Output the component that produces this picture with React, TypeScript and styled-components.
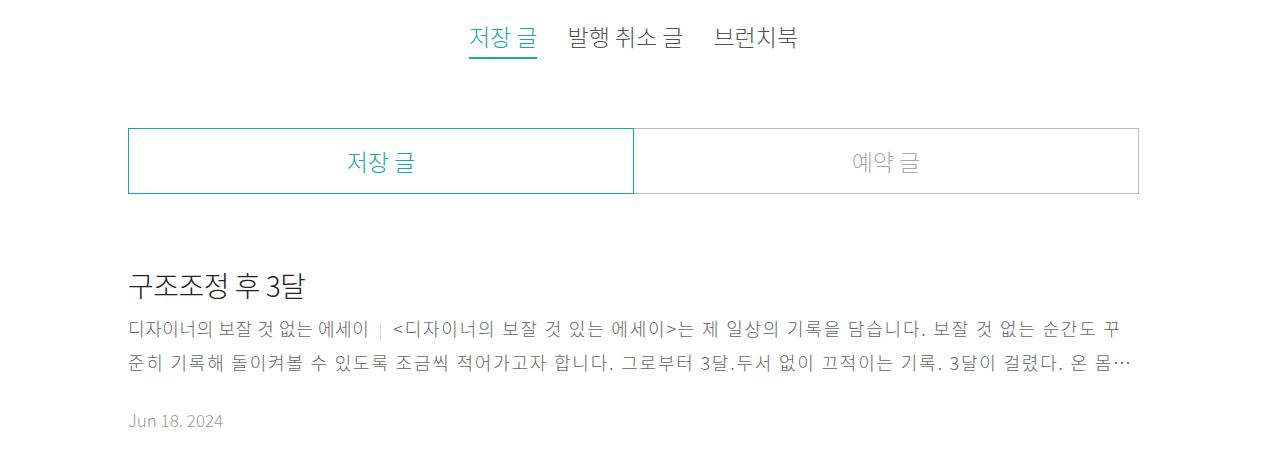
import React, { useState } from 'react';
import styled, { createGlobalStyle } from 'styled-components';

const GlobalStyle = createGlobalStyle`
    html, body {
        margin: 0;
        padding: 0;
        background: #ffffff;
    }
    body {
        font-family: 'Noto Sans CJK KR', 'Noto Sans', sans-serif;
        -webkit-font-smoothing: antialiased;
    }
`;

const TEAL = '#1aa9a2';

const Page = styled.div`
    padding: 0 141px 0 128px;
`;

const TopTabs = styled.nav`
    display: flex;
    justify-content: center;
    gap: 30px;
    padding-top: 21px;
`;

const TopTab = styled.button<{ $active?: boolean }>`
    background: none;
    border: none;
    padding: 0 0 5px;
    font-family: inherit;
    font-size: 23px;
    font-weight: 300;
    line-height: 31px;
    color: ${({ $active }) => ($active ? TEAL : '#555')};
    border-bottom: 2px solid ${({ $active }) => ($active ? TEAL : 'transparent')};
    cursor: pointer;
`;

const Segment = styled.div`
    display: flex;
    margin-top: 69px;
`;

const SegmentButton = styled.button<{ $active?: boolean }>`
    flex: 1;
    height: 66px;
    background: #fff;
    font-family: inherit;
    font-size: 23px;
    font-weight: 300;
    color: ${({ $active }) => ($active ? TEAL : '#aaa')};
    border: 1px solid ${({ $active }) => ($active ? TEAL : '#bbb')};
    border-left-width: ${({ $active }) => ($active ? '1px' : '0')};
    cursor: pointer;
`;

const Article = styled.article`
    margin-top: 72px;
`;

const Title = styled.h2`
    margin: 0;
    font-size: 28px;
    font-weight: 300;
    letter-spacing: -0.5px;
    line-height: 38px;
    color: #222;
`;

const Excerpt = styled.p`
    margin: 8px 0 0;
    font-size: 18px;
    font-weight: 300;
    line-height: 32px;
    letter-spacing: 1.8px;
    color: #666;
    display: -webkit-box;
    -webkit-line-clamp: 2;
    -webkit-box-orient: vertical;
    overflow: hidden;
`;

const Subtitle = styled.span`
    letter-spacing: 0.6px;
`;

const Divider = styled.span`
    color: #ccc;
    margin: 0 11px 0 9px;
    font-size: 15px;
    letter-spacing: 0;
`;

const DateText = styled.div`
    margin-top: 29px;
    font-size: 17px;
    font-weight: 300;
    color: #999;
`;

export default function App() {
    const [tab, setTab] = useState(0);
    const [seg, setSeg] = useState(0);
    const tabs = ['저장 글', '발행 취소 글', '브런치북'];

    return (
        <Page>
            <GlobalStyle />
            <TopTabs>
                {tabs.map((t, i) => (
                    <TopTab key={t} $active={tab === i} onClick={() => setTab(i)}>
                        {t}
                    </TopTab>
                ))}
            </TopTabs>
            <Segment>
                <SegmentButton $active={seg === 0} onClick={() => setSeg(0)}>
                    저장 글
                </SegmentButton>
                <SegmentButton $active={seg === 1} onClick={() => setSeg(1)}>
                    예약 글
                </SegmentButton>
            </Segment>
            <Article>
                <Title>구조조정 후 3달</Title>
                <Excerpt>
                    <Subtitle>디자이너의 보잘 것 없는 에세이</Subtitle>
                    <Divider>|</Divider>
                    &lt;디자이너의 보잘 것 있는 에세이&gt;는 제 일상의 기록을 담습니다. 보잘 것 없는 순간도 꾸준히 기록해
                    돌이켜볼 수 있도록 조금씩 적어가고자 합니다. 그로부터 3달.두서 없이 끄적이는 기록. 3달이 걸렸다. 온
                    몸으로 버텨낸 시간들이었다.
                </Excerpt>
                <DateText>Jun 18. 2024</DateText>
            </Article>
        </Page>
    );
}
